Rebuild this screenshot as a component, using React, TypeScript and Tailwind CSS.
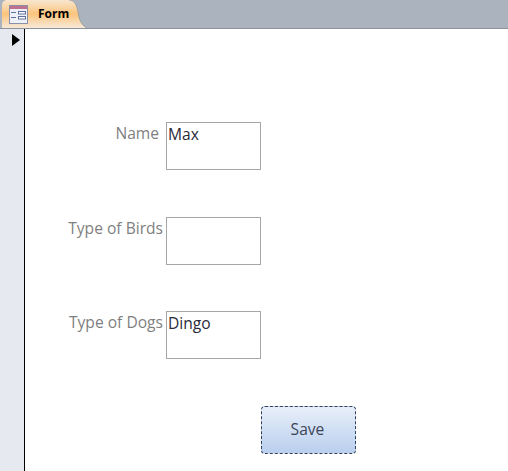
const fields = [
  { label: 'Name', value: 'Max', labelWidth: 'w-[159px]', boxGap: 'ml-[7px]', rowGap: 'mb-[47px]' },
  { label: 'Type of Birds', value: '', labelWidth: 'w-[163px]', boxGap: 'ml-[3px]', rowGap: 'mb-[46px]' },
  { label: 'Type of Dogs', value: 'Dingo', labelWidth: 'w-[163px]', boxGap: 'ml-[3px]', rowGap: 'mb-[47px]' },
];

const FormIcon = () => (
  <svg width="19" height="19" viewBox="0 0 19 19" className="shrink-0">
    <rect x="0.5" y="0.5" width="18" height="18" fill="#eef0f7" stroke="#8c8fa8" />
    <rect x="1" y="1" width="17" height="3" fill="#c0708f" />
    <rect x="2" y="7" width="5" height="1" fill="#5f6f9f" />
    <rect x="2" y="12" width="5" height="1" fill="#5f6f9f" />
    <rect x="9.5" y="6.5" width="7" height="2.5" fill="#fff" stroke="#5f6f9f" />
    <rect x="9.5" y="11.5" width="7" height="2.5" fill="#fff" stroke="#5f6f9f" />
  </svg>
);

export default function App() {
  return (
    <div className="flex h-[471px] w-[508px] flex-col overflow-hidden bg-white font-['Open_Sans',sans-serif]">
      <div className="flex h-[29px] shrink-0 items-end border-b border-[#8e939b] bg-[#abb3bf] pl-[2px]">
        <div className="flex h-[28px] w-[68px] items-center gap-[10px] rounded-tl-[5px] bg-gradient-to-b from-[#f7e6cf] via-[#fbc47c] to-[#f6e9d8] pl-[7px]">
          <FormIcon />
          <span className="text-[12px] font-bold text-black">Form</span>
        </div>
        <svg width="18" height="28" viewBox="0 0 18 28" className="-ml-px">
          <defs>
            <linearGradient id="tabEnd" x1="0" y1="0" x2="0" y2="1">
              <stop offset="0" stopColor="#f7e6cf" />
              <stop offset="0.5" stopColor="#fbc47c" />
              <stop offset="1" stopColor="#f6e9d8" />
            </linearGradient>
          </defs>
          <path d="M0 0 C6 0 8 6 9 12 C10 20 13 26 18 28 L0 28 Z" fill="url(#tabEnd)" />
          <path d="M0 0 C6 0 8 6 9 12 C10 20 13 26 18 28" fill="none" stroke="#8e939b" strokeWidth="0.7" />
        </svg>
      </div>
      <div className="flex min-h-0 flex-1">
        <div className="flex w-[25px] shrink-0 justify-start border-r border-black bg-[#e6e9f0] pl-[12px] pt-[5px]">
          <svg width="9" height="12" viewBox="0 0 9 12">
            <path d="M0 0 L8 6 L0 12 Z" fill="#000" />
          </svg>
        </div>
        <div className="-ml-[25px] flex-1 pt-[93px]">
          {fields.map((f) => (
            <div key={f.label} className={`flex h-[48px] ${f.rowGap}`}>
              <div className={`${f.labelWidth} text-right text-[15.6px] leading-[22px] text-[#7f7f7f]`}>{f.label}</div>
              <div className={`${f.boxGap} h-[48px] w-[95px] border border-[#a6a6a6] pl-[1px] text-[15.6px] leading-[22px] text-[#2a2a3a]`}>
                {f.value}
              </div>
            </div>
          ))}
          <div className="pl-[261px]">
            <button className="h-[48px] w-[95px] rounded-[4px] border border-dashed border-[#33415c] bg-gradient-to-b from-[#e8eff9] to-[#b9cfee] pr-[2px] text-[15.6px] text-[#3c4658]">
              Save
            </button>
          </div>
        </div>
      </div>
    </div>
  );
}
